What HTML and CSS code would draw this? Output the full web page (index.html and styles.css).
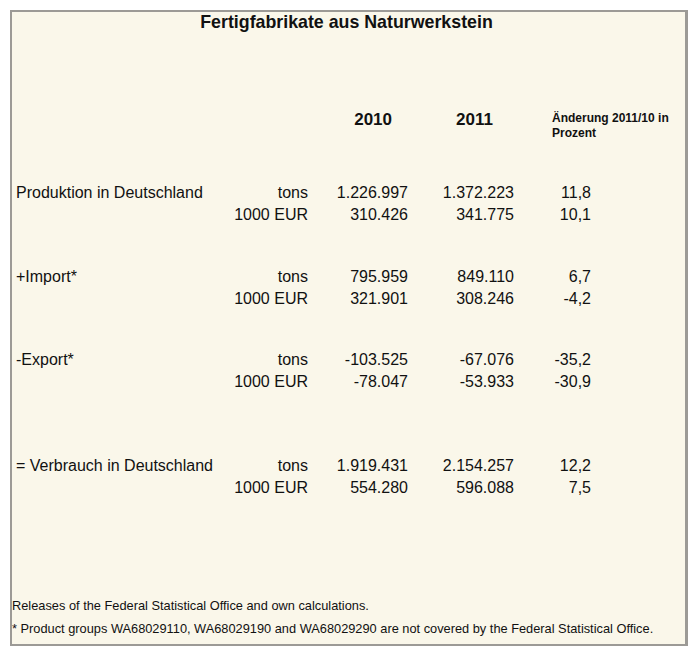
FILE: index.html
```html
<!DOCTYPE html>
<html lang="de">
<head>
<meta charset="utf-8">
<title>Fertigfabrikate aus Naturwerkstein</title>
<link rel="stylesheet" href="styles.css">
</head>
<body>
<div class="panel">
  <h1 class="title">Fertigfabrikate aus Naturwerkstein</h1>

  <div class="grid head">
    <div></div>
    <div></div>
    <div class="year y2010">2010</div>
    <div class="year y2011">2011</div>
    <div class="change-head">Änderung 2011/10 in<br>Prozent</div>
  </div>

  <div class="grid group g1">
    <div class="label">Produktion in Deutschland</div>
    <div class="unit">tons</div>
    <div class="num">1.226.997</div>
    <div class="num">1.372.223</div>
    <div class="pct">11,8</div>
    <div></div>
    <div class="unit">1000 EUR</div>
    <div class="num">310.426</div>
    <div class="num">341.775</div>
    <div class="pct">10,1</div>
  </div>

  <div class="grid group g2">
    <div class="label">+Import*</div>
    <div class="unit">tons</div>
    <div class="num">795.959</div>
    <div class="num">849.110</div>
    <div class="pct">6,7</div>
    <div></div>
    <div class="unit">1000 EUR</div>
    <div class="num">321.901</div>
    <div class="num">308.246</div>
    <div class="pct">-4,2</div>
  </div>

  <div class="grid group g3">
    <div class="label">-Export*</div>
    <div class="unit">tons</div>
    <div class="num">-103.525</div>
    <div class="num">-67.076</div>
    <div class="pct">-35,2</div>
    <div></div>
    <div class="unit">1000 EUR</div>
    <div class="num">-78.047</div>
    <div class="num">-53.933</div>
    <div class="pct">-30,9</div>
  </div>

  <div class="grid group g4">
    <div class="label">= Verbrauch in Deutschland</div>
    <div class="unit">tons</div>
    <div class="num">1.919.431</div>
    <div class="num">2.154.257</div>
    <div class="pct">12,2</div>
    <div></div>
    <div class="unit">1000 EUR</div>
    <div class="num">554.280</div>
    <div class="num">596.088</div>
    <div class="pct">7,5</div>
  </div>

  <div class="notes">
    <p>Releases of the Federal Statistical Office and own calculations.</p>
    <p>* Product groups WA68029110, WA68029190 and WA68029290 are not covered by the Federal Statistical Office.</p>
  </div>
</div>
</body>
</html>
```

FILE: styles.css
```css
html, body {
  margin: 0;
  padding: 0;
  background: #ffffff;
}

body {
  font-family: "Liberation Sans", Arial, sans-serif;
  color: #111111;
}

.panel {
  box-sizing: border-box;
  margin: 10px 0 0 10px;
  width: 678px;
  height: 636px;
  background: #faf7ea;
  border: 2px solid #9c9a96;
  border-right-width: 3px;
  border-bottom-width: 2px;
  display: flex;
  flex-direction: column;
}

.title {
  margin: 0;
  font-size: 17.8px;
  line-height: 20px;
  font-weight: bold;
  text-align: center;
  padding-right: 4px;
}

.grid {
  display: grid;
  grid-template-columns: 214px 78px 100px 106px 77px;
  margin-left: 4px;
}

.head {
  margin-top: 78px;
  align-items: start;
}

.year {
  font-size: 17px;
  line-height: 20px;
  font-weight: bold;
  text-align: right;
}

.y2010 { padding-right: 16px; }
.y2011 { padding-right: 21px; }

.change-head {
  font-size: 12px;
  line-height: 15px;
  font-weight: bold;
  padding-left: 38px;
  padding-top: 1px;
  white-space: nowrap;
}

.group {
  font-size: 16px;
  line-height: 22px;
}

.g1 { margin-top: 41px; }
.g2 { margin-top: 40px; }
.g3 { margin-top: 39px; }
.g4 { margin-top: 62px; }

.label {
  white-space: nowrap;
}

.unit,
.num,
.pct {
  text-align: right;
}

.notes {
  margin-top: auto;
  padding: 0 0 4px 0;
  font-size: 12.8px;
  line-height: 23px;
}

.notes p {
  margin: 0;
}
```
